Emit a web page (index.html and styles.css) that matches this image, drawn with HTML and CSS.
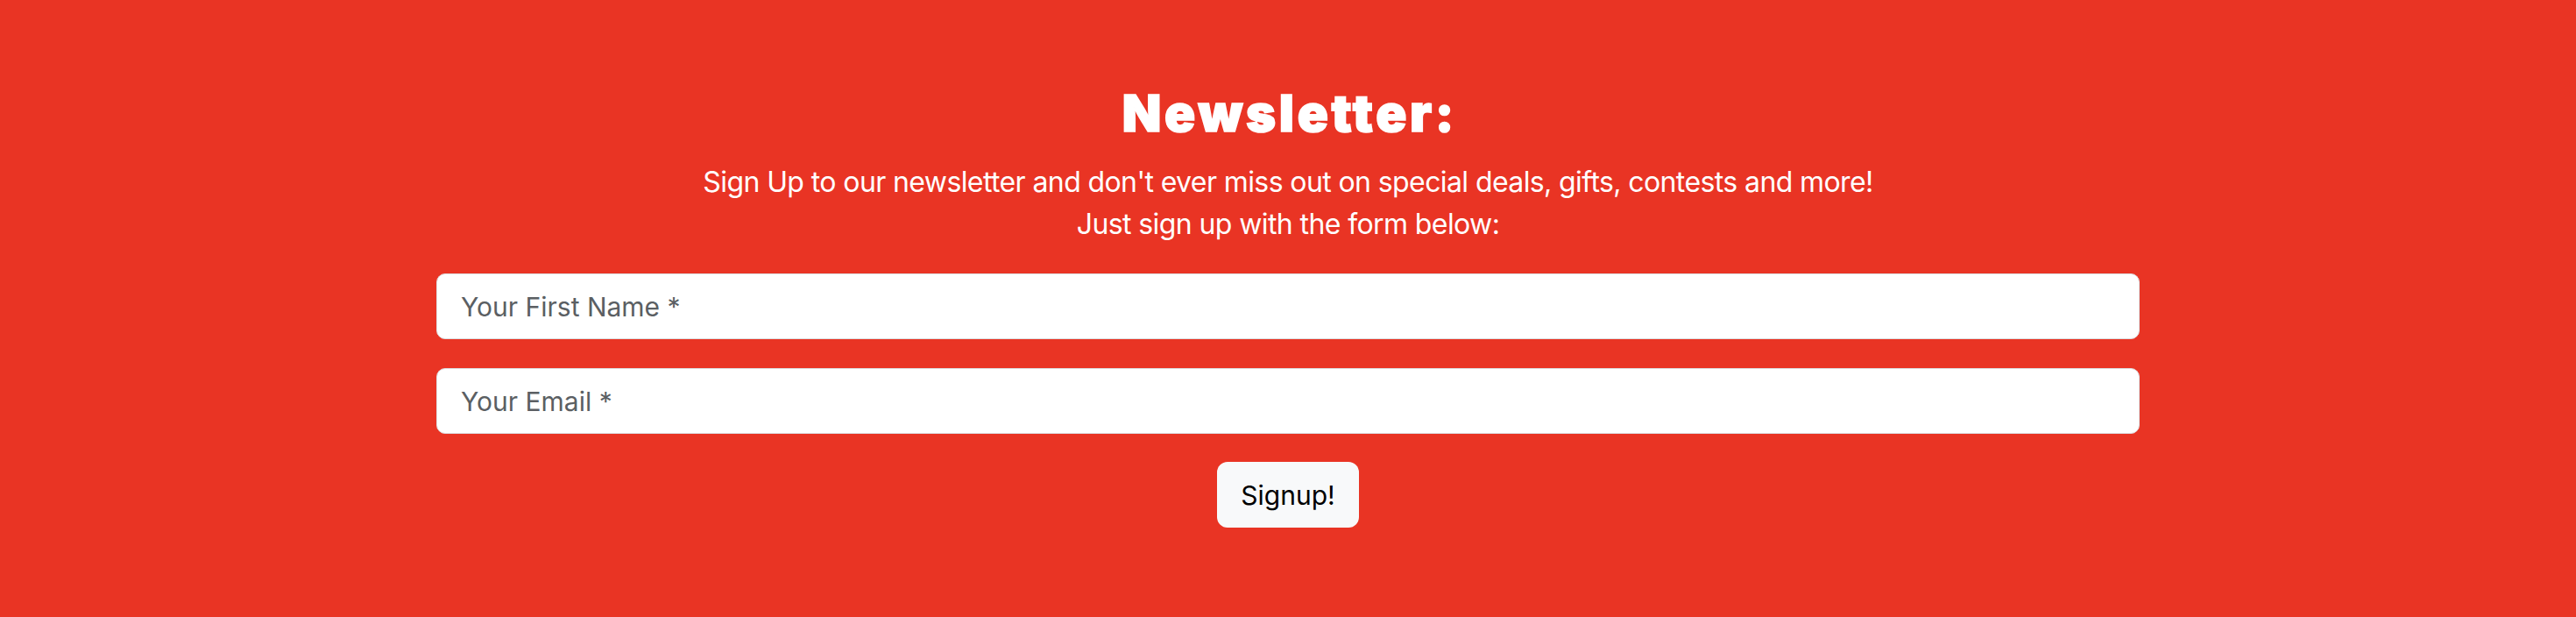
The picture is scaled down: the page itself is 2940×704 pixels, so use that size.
FILE: index.html
```html
<!DOCTYPE html>
<html lang="en">
<head>
<meta charset="utf-8">
<title>Newsletter</title>
<link rel="stylesheet" href="styles.css">
</head>
<body>
<section class="newsletter">
  <h2 class="newsletter-title">Newsletter:</h2>
  <p class="newsletter-text">Sign Up to our newsletter and don't ever miss out on special deals, gifts, contests and more!<br>Just sign up with the form below:</p>
  <form class="newsletter-form">
    <input class="field" type="text" placeholder="Your First Name *">
    <input class="field" type="email" placeholder="Your Email *">
    <button class="signup-btn" type="button">Signup!</button>
  </form>
</section>
</body>
</html>
```

FILE: styles.css
```css
html, body {
  margin: 0;
  padding: 0;
}

body {
  background: #e93424;
  font-family: Inter, "Liberation Sans", sans-serif;
  color: #ffffff;
}

.newsletter {
  box-sizing: border-box;
  min-height: 704px;
  padding: 95px 0 0;
  display: flex;
  flex-direction: column;
  align-items: center;
}

.newsletter-title {
  margin: 0 0 21px;
  padding-left: 4px;
  font-family: Inter, "Liberation Sans", sans-serif;
  font-weight: 900;
  font-size: 58px;
  line-height: 68px;
  letter-spacing: 3.7px;
  -webkit-text-stroke: 1.6px #ffffff;
  text-align: center;
}

.newsletter-text {
  margin: 0 0 32px;
  font-size: 32px;
  line-height: 48px;
  font-weight: 400;
  letter-spacing: -0.6px;
  text-align: center;
}

.newsletter-form {
  width: 1944px;
  display: flex;
  flex-direction: column;
  align-items: center;
  gap: 33px;
}

.field {
  box-sizing: border-box;
  width: 100%;
  height: 75px;
  padding: 0 27px;
  border: 1px solid #dcdde0;
  border-radius: 10px;
  background: #ffffff;
  font-family: Inter, "Liberation Sans", sans-serif;
  font-size: 30px;
  color: #212529;
  outline: none;
}

.field::placeholder {
  color: #5b5f63;
  opacity: 1;
}

.signup-btn {
  box-sizing: border-box;
  width: 162px;
  height: 75px;
  margin-top: -1px;
  border: none;
  border-radius: 12px;
  background: #f8f9fa;
  color: #000000;
  font-family: Inter, "Liberation Sans", sans-serif;
  font-size: 30px;
  padding: 0;
  cursor: pointer;
}
```
